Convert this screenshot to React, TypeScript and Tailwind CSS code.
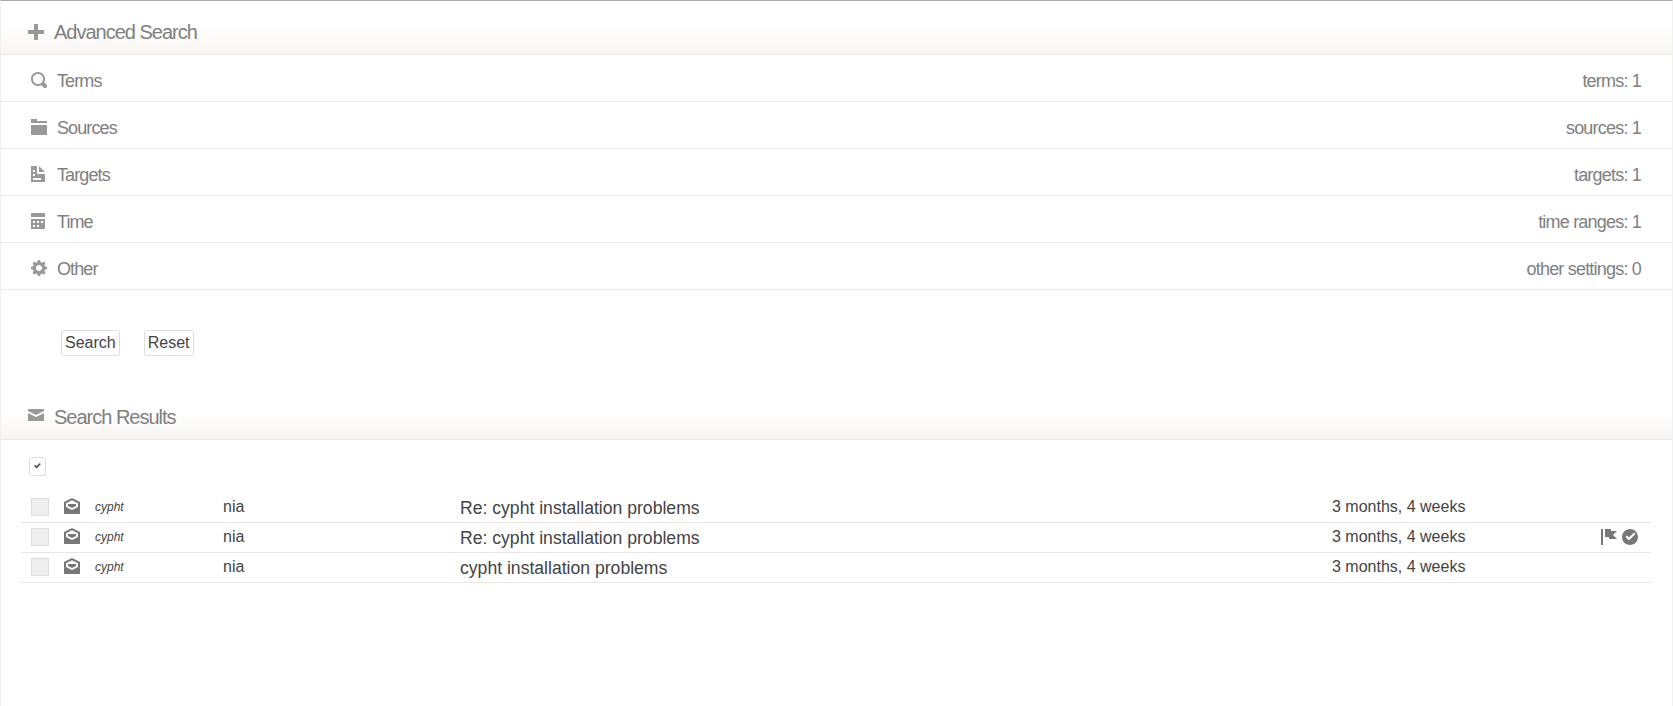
const FONT = "font-['Liberation_Sans',Arial,sans-serif]";

const icons = {
  plus: "M3 0v3h-3v2h3v3h2v-3h3v-2h-3v-3h-2z",
  search:
    "M3.5 0c-1.93 0-3.5 1.57-3.5 3.5s1.57 3.5 3.5 3.5c.59 0 1.17-.14 1.66-.41a1 1 0 0 0 .13.13l1 1a1.02 1.02 0 1 0 1.44-1.44l-1-1a1 1 0 0 0-.16-.13c.27-.49.44-1.06.44-1.66 0-1.93-1.57-3.5-3.5-3.5zm0 1c1.39 0 2.5 1.11 2.5 2.5 0 .66-.24 1.27-.66 1.72-.01.01-.02.02-.03.03a1 1 0 0 0-.13.13c-.44.4-1.04.63-1.69.63-1.39 0-2.5-1.11-2.5-2.5s1.11-2.5 2.5-2.5z",
  folder: "M0 0v2h8v-1h-5v-1h-3zm0 3v4.5c0 .28.22.5.5.5h7c.28 0 .5-.22.5-.5v-4.5h-8z",
  doc: "M0 0v8h7v-4h-4v-4h-3zm4 0v3h3l-3-3zm-3 2h1v1h-1v-1zm0 2h1v1h-1v-1zm0 2h4v1h-4v-1z",
  calendar:
    "M0 0v2h7v-2h-7zm0 3v4.91c0 .05.04.09.09.09h6.81c.05 0 .09-.04.09-.09v-4.91h-7zm1 1h1v1h-1v-1zm2 0h1v1h-1v-1zm2 0h1v1h-1v-1zm-4 2h1v1h-1v-1zm2 0h1v1h-1v-1z",
  cog: "M3.5 0l-.5 1.19c-.1.03-.19.08-.28.13l-1.19-.5-.72.72.5 1.19c-.05.1-.09.18-.13.28l-1.19.5v1l1.19.5c.04.1.08.18.13.28l-.5 1.19.72.72 1.19-.5c.09.04.18.09.28.13l.5 1.19h1l.5-1.19c.09-.04.19-.08.28-.13l1.19.5.72-.72-.5-1.19c.04-.09.09-.19.13-.28l1.19-.5v-1l-1.19-.5c-.03-.09-.08-.19-.13-.28l.5-1.19-.72-.72-1.19.5c-.09-.04-.19-.09-.28-.13l-.5-1.19h-1zm.5 2.5c.83 0 1.5.67 1.5 1.5s-.67 1.5-1.5 1.5-1.5-.67-1.5-1.5.67-1.5 1.5-1.5z",
  mail: "M0 0v1l4 2 4-2v-1h-8zm0 2v4h8v-4l-4 2-4-2z",
  mailOpen: "M4 0l-4 2v6h8v-6l-4-2zm0 1.13l3 1.5v1.88l-3 1.5-3-1.5v-1.88l3-1.5zm-2 1.88v1l2 1 2-1v-1h-4z",
  flag: "M0 0v8h1v-8h-1zm2 0v4h2v1h4l-2-1.97 2-2.03h-3v-1h-3z",
  circleCheck:
    "M4 0c-2.2 0-4 1.8-4 4s1.8 4 4 4 4-1.8 4-4-1.8-4-4-4zm2 1.78l.72.72-3.22 3.22-1.72-1.72.72-.72 1 1 2.5-2.5z",
  check:
    "M6.41 0l-.69.72-2.78 2.78-.81-.78-.72-.72-1.41 1.41.72.72 1.5 1.5.69.72.72-.72 3.5-3.5.72-.72-1.44-1.41z",
};

function Icon({ d, className }: { d: string; className: string }) {
  return (
    <svg viewBox="0 0 8 8" className={className} fill="currentColor" fillRule="evenodd">
      <path d={d} />
    </svg>
  );
}

function SectionHeader({ icon, title }: { icon: string; title: string }) {
  return (
    <div className="flex h-[54px] items-center border-b border-[#efe9e5] bg-gradient-to-b from-white from-50% to-[#f8f5f2] pl-[27px] pt-[8px]">
      <Icon d={icon} className="h-4 w-4 shrink-0 text-[#999]" />
      <span className="ml-[10px] text-[20px] tracking-[-1px] text-[#808080]">{title}</span>
    </div>
  );
}

const filters = [
  { icon: icons.search, label: "Terms", value: "terms: 1" },
  { icon: icons.folder, label: "Sources", value: "sources: 1" },
  { icon: icons.doc, label: "Targets", value: "targets: 1" },
  { icon: icons.calendar, label: "Time", value: "time ranges: 1" },
  { icon: icons.cog, label: "Other", value: "other settings: 0" },
];

const messages = [
  { subject: "Re: cypht installation problems", actions: false },
  { subject: "Re: cypht installation problems", actions: true },
  { subject: "cypht installation problems", actions: false },
];

export default function App() {
  return (
    <div className={`${FONT} h-[706px] overflow-hidden border-x border-[#f0f0f0] border-t border-t-[#aaa] bg-white`}>
      <SectionHeader icon={icons.plus} title="Advanced Search" />

      {filters.map((f) => (
        <div key={f.label} className="flex h-[47px] items-center justify-between border-b border-[#ebe8e6] pl-[30px] pr-[31px] pt-[7px]">
          <div className="flex items-center">
            <Icon d={f.icon} className="mb-[4px] h-4 w-4 shrink-0 text-[#999]" />
            <span className="ml-[10px] text-[18px] tracking-[-0.9px] text-[#808080]">{f.label}</span>
          </div>
          <span className="text-[18px] tracking-[-0.8px] text-[#808080]">{f.value}</span>
        </div>
      ))}

      <div className="flex h-[96px] items-start gap-[24px] pl-[60px] pt-[40px]">
        <button className="h-[26px] rounded-[3px] border border-[#ddd] bg-white px-[3px] text-[16px] leading-none text-[#444]">
          Search
        </button>
        <button className="h-[26px] rounded-[3px] border border-[#ddd] bg-white px-[3px] text-[16px] leading-none text-[#444]">
          Reset
        </button>
      </div>

      <SectionHeader icon={icons.mail} title="Search Results" />

      <div className="pl-[28px] pt-[17px]">
        <div className="flex h-[19px] w-[17px] items-center justify-center rounded-[3px] border border-[#ddd] bg-white">
          <Icon d={icons.check} className="h-[7px] w-[7px] text-[#555]" />
        </div>
      </div>

      <div className="ml-[20px] mr-[21px] mt-[17px]">
        {messages.map((m, i) => (
          <div key={i} className="flex h-[30px] items-center border-b border-[#e8e4e2] pb-[2px]">
            <div className="ml-[10px] h-[18px] w-[18px] shrink-0 border border-[#ddd] bg-[#eee]" />
            <Icon d={icons.mailOpen} className="mb-[1px] ml-[15px] h-4 w-4 shrink-0 text-[#777]" />
            <span className="ml-[15px] w-[128px] shrink-0 text-[12px] italic text-[#444]">cypht</span>
            <span className="w-[237px] shrink-0 text-[16px] text-[#444]">nia</span>
            <span className="w-[872px] shrink-0 pt-[3px] text-[17.6px] text-[#444]">{m.subject}</span>
            <span className="w-[269px] shrink-0 text-[16px] text-[#444]">3 months, 4 weeks</span>
            {m.actions && (
              <div className="flex items-center gap-[5px]">
                <Icon d={icons.flag} className="h-4 w-4 shrink-0 text-[#777]" />
                <Icon d={icons.circleCheck} className="h-4 w-4 shrink-0 text-[#777]" />
              </div>
            )}
          </div>
        ))}
      </div>
    </div>
  );
}
